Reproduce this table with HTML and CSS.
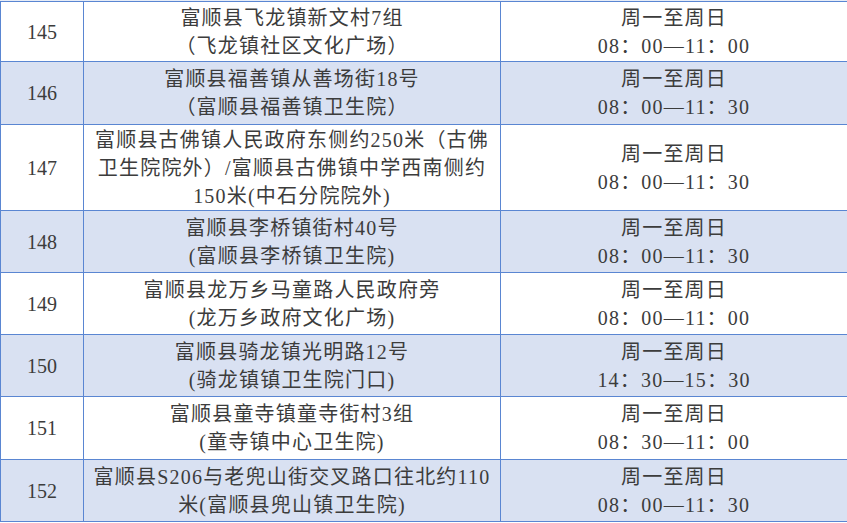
FILE: index.html
```html
<!DOCTYPE html>
<html lang="zh-CN">
<head>
<meta charset="utf-8">
<title>采样点</title>
<link rel="stylesheet" href="styles.css">
</head>
<body>
<div class="topstrip"></div>
<table class="sites">
  <colgroup><col class="c-no"><col class="c-addr"><col class="c-time"></colgroup>
  <tbody>
    <tr><td class="no">145</td><td>富顺县飞龙镇新文村7组<br>（飞龙镇社区文化广场）</td><td>周一至周日<br>08：00—11：00</td></tr>
    <tr class="alt"><td class="no">146</td><td>富顺县福善镇从善场街18号<br>（富顺县福善镇卫生院）</td><td>周一至周日<br>08：00—11：30</td></tr>
    <tr><td class="no">147</td><td>富顺县古佛镇人民政府东侧约250米（古佛<br>卫生院院外）/富顺县古佛镇中学西南侧约<br>150米(中石分院院外)</td><td>周一至周日<br>08：00—11：30</td></tr>
    <tr class="alt"><td class="no">148</td><td>富顺县李桥镇街村40号<br>(富顺县李桥镇卫生院)</td><td>周一至周日<br>08：00—11：30</td></tr>
    <tr><td class="no">149</td><td>富顺县龙万乡马童路人民政府旁<br>(龙万乡政府文化广场)</td><td>周一至周日<br>08：00—11：00</td></tr>
    <tr class="alt"><td class="no">150</td><td>富顺县骑龙镇光明路12号<br>(骑龙镇镇卫生院门口)</td><td>周一至周日<br>14：30—15：30</td></tr>
    <tr><td class="no">151</td><td>富顺县童寺镇童寺街村3组<br>(童寺镇中心卫生院)</td><td>周一至周日<br>08：30—11：00</td></tr>
    <tr class="alt"><td class="no">152</td><td>富顺县S206与老兜山街交叉路口往北约110<br>米(富顺县兜山镇卫生院)</td><td>周一至周日<br>08：00—11：30</td></tr>
  </tbody>
</table>
</body>
</html>
```
FILE: styles.css
```css
html, body {
  margin: 0;
  padding: 0;
  background: #ffffff;
}
body {
  width: 847px;
  height: 523px;
  overflow: hidden;
  font-family: "Liberation Serif", "Noto Sans CJK SC", serif;
  color: #3c3c3c;
}
.topstrip {
  height: 1px;
  background: #e6ecf7;
}
.sites {
  border-collapse: collapse;
  table-layout: fixed;
  width: 847px;
  font-size: 20px;
  line-height: 28px;
}
.c-no { width: 83px; }
.c-addr { width: 417px; }
.c-time { width: 347px; }
.sites td {
  border: 1px solid #5a86d2;
  text-align: center;
  vertical-align: middle;
  padding: 0;
  height: 61px;
  white-space: nowrap;
  letter-spacing: 1.2px;
}
.sites td.no {
  letter-spacing: 0;
}
.sites tr:nth-child(1) td { height: 59px; }
.sites tr:nth-child(2) td { height: 62px; }
.sites tr:nth-child(3) td { height: 85px; }
.sites tr:nth-child(4) td { height: 61px; }
.sites tr:nth-child(5) td { height: 61px; }
.sites tr:nth-child(6) td { height: 61px; }
.sites tr:nth-child(7) td { height: 62px; }
.sites tr:nth-child(8) td { height: 61px; }
.sites tr.alt td {
  background: #d9e1f2;
}
```
